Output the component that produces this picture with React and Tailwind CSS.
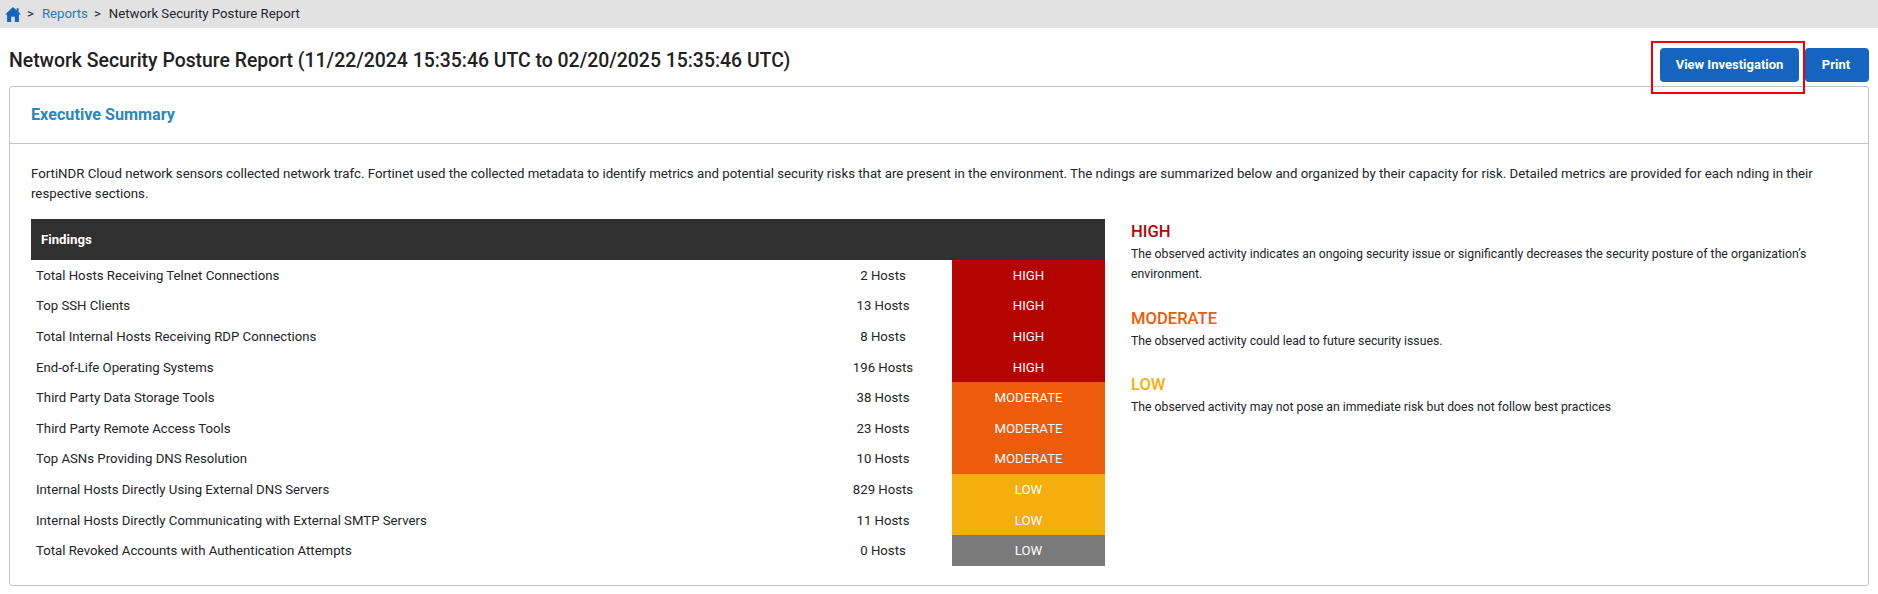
import React from 'react';

const findings = [
  ['Total Hosts Receiving Telnet Connections', '2 Hosts', 'HIGH', 'bg-[#b30400]'],
  ['Top SSH Clients', '13 Hosts', 'HIGH', 'bg-[#b30400]'],
  ['Total Internal Hosts Receiving RDP Connections', '8 Hosts', 'HIGH', 'bg-[#b30400]'],
  ['End-of-Life Operating Systems', '196 Hosts', 'HIGH', 'bg-[#b30400]'],
  ['Third Party Data Storage Tools', '38 Hosts', 'MODERATE', 'bg-[#ed5c0a]'],
  ['Third Party Remote Access Tools', '23 Hosts', 'MODERATE', 'bg-[#ed5c0a]'],
  ['Top ASNs Providing DNS Resolution', '10 Hosts', 'MODERATE', 'bg-[#ed5c0a]'],
  ['Internal Hosts Directly Using External DNS Servers', '829 Hosts', 'LOW', 'bg-[#f4ae0e]'],
  ['Internal Hosts Directly Communicating with External SMTP Servers', '11 Hosts', 'LOW', 'bg-[#f4ae0e]'],
  ['Total Revoked Accounts with Authentication Attempts', '0 Hosts', 'LOW', 'bg-[#7a7a7a]'],
];

const legend = [
  {
    label: 'HIGH',
    color: 'text-[#b30400]',
    text: 'The observed activity indicates an ongoing security issue or significantly decreases the security posture of the organization’s environment.',
    space: 'mb-[25px]',
  },
  { label: 'MODERATE', color: 'text-[#ed5c0a]', text: 'The observed activity could lead to future security issues.', space: 'mb-[24px]' },
  { label: 'LOW', color: 'text-[#f4ae0e]', text: 'The observed activity may not pose an immediate risk but does not follow best practices', space: '' },
];

const App = () => {
  return (
    <div className="w-[1878px] h-[594px] bg-white overflow-hidden font-['Roboto',sans-serif] text-[#212529]">
      <div className="h-[28px] bg-[#e2e2e2] flex items-center pl-[5px] text-[13.2px]">
        <svg viewBox="0 0 16 15" className="w-[16px] h-[15px] fill-[#1565c0]">
          <path d="M8 0 L11.6 3.2 L11.6 1.2 L13.6 1.2 L13.6 5 L16 7.6 L13.9 7.6 L13.9 15 L9.8 15 L9.8 9.8 L6.2 9.8 L6.2 15 L2.1 15 L2.1 7.6 L0 7.6 Z" />
        </svg>
        <span className="ml-[6px]">&gt;</span>
        <a className="ml-[8px] text-[#2f74c0]">Reports</a>
        <span className="ml-[6px]">&gt;</span>
        <span className="ml-[8px]">Network Security Posture Report</span>
      </div>

      <div className="flex items-start justify-between pl-[9px] pr-[9px] pt-[20px] h-[58px] relative">
        <h1 className="text-[19.4px] leading-[20px] font-medium pt-[3px] text-[#212121]">
          Network Security Posture Report (11/22/2024 15:35:46 UTC to 02/20/2025 15:35:46 UTC)
        </h1>
        <div className="flex gap-[6px]">
          <div className="relative">
            <button className="w-[139px] h-[34px] bg-[#1565c0] text-white text-[13px] font-bold rounded-[4px]">View Investigation</button>
            <div className="absolute left-[-9px] top-[-7px] w-[154px] h-[53px] border-[2px] border-[#f00000]" />
          </div>
          <button className="w-[64px] h-[34px] bg-[#1565c0] text-white text-[13px] font-bold rounded-[4px] pr-[2px]">Print</button>
        </div>
      </div>

      <div className="mx-[9px] h-[500px] border border-[#c4c4c4] rounded-[3px] overflow-hidden">
        <div className="h-[57px] border-b border-[#c4c4c4] flex items-center pl-[21px]">
          <h2 className="text-[16.2px] font-bold text-[#2b87ba]">Executive Summary</h2>
        </div>
        <div className="pt-[20px] px-[21px]">
          <p className="text-[13.25px] leading-[20px]">
            FortiNDR Cloud network sensors collected network trafc. Fortinet used the collected metadata to identify metrics and potential security risks that are present in the environment. The ndings are summarized below and organized by their capacity for risk. Detailed metrics are provided for each nding in their respective sections.
          </p>
          <div className="flex mt-[15px]">
            <table className="w-[1074px] shrink-0 table-fixed border-collapse text-[13.2px]">
              <colgroup>
                <col className="w-[783px]" />
                <col className="w-[138px]" />
                <col className="w-[153px]" />
              </colgroup>
              <thead>
                <tr className="h-[41px] bg-[#303030] text-white">
                  <th colSpan={3} className="text-left pl-[10px] font-bold">Findings</th>
                </tr>
              </thead>
              <tbody>
                {findings.map(([name, hosts, level, bg]) => (
                  <tr key={name} className="h-[30.6px]">
                    <td className="pl-[5px] pt-[1px]">{name}</td>
                    <td className="pt-[1px] text-center">{hosts}</td>
                    <td className={`pt-[1px] text-center text-white ${bg}`}>{level}</td>
                  </tr>
                ))}
              </tbody>
            </table>
            <div className="ml-[26px] flex-1 pt-[3px]">
              {legend.map((item) => (
                <div key={item.label} className={item.space}>
                  <h3 className={`text-[16.6px] leading-[20px] font-medium ${item.color}`}>{item.label}</h3>
                  <p className="text-[12.25px] leading-[20px] mt-[2px]">{item.text}</p>
                </div>
              ))}
            </div>
          </div>
        </div>
      </div>
    </div>
  );
};

export default App;
